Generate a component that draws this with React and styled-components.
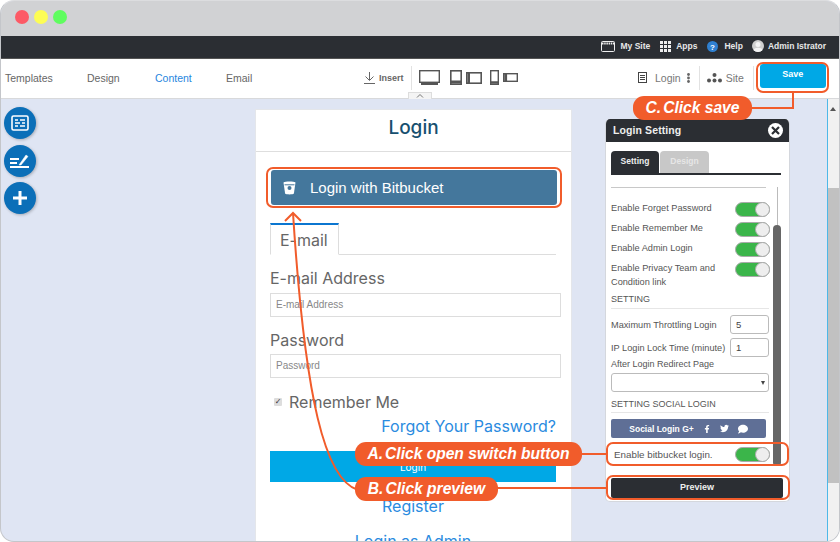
import React from 'react';
import styled, { createGlobalStyle } from 'styled-components';
import { FaFacebookF, FaTwitter, FaComment } from 'react-icons/fa';

const Global = createGlobalStyle`
  html, body { margin: 0; padding: 0; background: #fff; }
  * { box-sizing: border-box; }
`;
const Page = styled.div`
  position: relative; width: 840px; height: 542px; overflow: hidden;
`;
const Win = styled.div`
  width: 840px; height: 542px; overflow: hidden; display: flex; flex-direction: column;
  border-radius: 14px; border: 1px solid #c4c6ca; border-top-color: #dcdddf;
  font-family: "Liberation Sans", Arial, sans-serif; background: #dfe5f3;
`;
const TitleBar = styled.div`
  height: 35px; flex: none; background: #d1d2d4; display: flex; align-items: center; gap: 5px; padding: 0 0 3px 14px;
`;
const Dot = styled.span`
  width: 14px; height: 14px; border-radius: 50%; background: ${p => p.$c};
`;
const DarkBar = styled.div`
  height: 23px; flex: none; background: #2b2e33; display: flex; align-items: center; justify-content: flex-end;
  padding: 0 13px 2px 0; border-bottom: 1px solid #555;
`;
const TopItem = styled.span`
  display: flex; align-items: center; gap: ${p => p.$g || 5}px; margin-left: ${p => p.$ml || 10}px;
  color: #e8e8e8; font-size: 8.5px; font-weight: bold; white-space: nowrap;
`;
const Toolbar = styled.div`
  height: 40px; flex: none; background: #fff; border-bottom: 1px solid #d8d9db; display: flex; align-items: center;
  position: relative; padding: 0 0 2px 4px;
`;
const Nav = styled.span`
  font-size: 10.5px; color: ${p => p.$active ? '#1f86de' : '#666'}; width: ${p => p.$w}px; flex: none;
`;
const Insert = styled.span`
  display: flex; align-items: center; gap: 4px; font-size: 9px; font-weight: bold; color: #666; margin-left: 112px; width: 47px; flex: none;
`;
const VSep = styled.span`
  width: 1px; height: 24px; background: #e2e2e2; flex: none; margin-left: ${p => p.$ml || 0}px;
`;
const Devices = styled.span`
  display: flex; align-items: center; flex: none; margin-left: 7px; width: 219px;
`;
const ToolText = styled.span`
  font-size: 10.5px; color: #777; flex: none; margin-left: ${p => p.$ml || 0}px;
`;
const SaveBtn = styled.button`
  width: 66px; height: 24px; background: #00a8e6; border: 0; border-radius: 3px; color: #fff; font: bold 9px "Liberation Sans", Arial, sans-serif;
  margin: -4px 0 0 6px; padding: 0 0 3px; flex: none;
`;
const Collapse = styled.span`
  position: absolute; left: 407px; bottom: -1px; width: 24px; height: 7px; background: #f4f4f4; border: 1px solid #ddd; border-bottom: 0;
  display: flex; align-items: center; justify-content: center;
`;
const Body = styled.div`
  flex: 1; min-height: 0; display: flex; position: relative;
`;
const Rail = styled.div`
  width: 254px; flex: none; display: flex; flex-direction: column; gap: 5.5px; padding: 8px 0 0 3px;
`;
const RailBtn = styled.span`
  width: 32px; height: 32px; border-radius: 50%; background: #0b6fb8; display: flex; align-items: center; justify-content: center;
  box-shadow: 1px 1px 3px rgba(0,0,0,.25);
`;
const Card = styled.div`
  width: 317px; flex: none; margin-top: 10px; height: 480px; background: #fff; border: 1px solid #e4e6ea; font-family: "Inter", sans-serif;
`;
const CardHead = styled.div`
  height: 42px; border-bottom: 1px solid #dedede; text-align: center; line-height: 36px; font-size: 19px; font-weight: 500; color: #17506f;
`;
const CardBody = styled.div`
  padding: 18px 14px 0 14px; display: flex; flex-direction: column; align-items: stretch;
`;
const BitBtn = styled.div`
  height: 35px; width: 286px; margin-left: 1px; background: #44779c; border-radius: 3px; display: flex; align-items: center; padding-left: 12px; gap: 14px;
  color: #fff; font: 15px "Liberation Sans", Arial, sans-serif;
`;
const TabRow = styled.div`
  margin-top: 18px; width: 286px; height: 32px; border-bottom: 1px solid #ddd; display: flex;
`;
const EmailTab = styled.span`
  width: 69px; height: 32px; border: 1px solid #ddd; border-top: 2px solid #0b76d0; border-bottom: 1px solid #fff; font-size: 16px; color: #666;
  padding: 5px 0 0 9px;
`;
const FieldLabel = styled.div`
  font-size: 16px; color: #666; margin-top: ${p => p.$mt}px; line-height: 18px;
`;
const FieldBox = styled.div`
  width: 291px; height: 24px; border: 1px solid #ddd; margin-top: ${p => p.$mt}px; font: 10px/22px "Liberation Sans", Arial, sans-serif; color: #888; padding-left: 5px;
`;
const Remember = styled.div`
  margin-top: 15px; display: flex; align-items: center; gap: 7px; padding-left: 4px; font-size: 16px; color: #666; height: 18px;
`;
const Check = styled.span`
  width: 8px; height: 8px; background: #ddd; border-radius: 1px; color: #333; font: bold 8px/8px "DejaVu Sans", sans-serif; text-align: center;
`;
const LinkRow = styled.div`
  color: #2a8be0; font-size: 16px; text-align: ${p => p.$a || 'right'}; width: 286px; margin-top: ${p => p.$mt}px; line-height: 20px; white-space: nowrap;
`;
const LoginBtn = styled.div`
  width: 286px; height: 31px; background: #00a8e6; margin-top: 15px; color: #fff; text-align: center; font-size: 10px; line-height: 32px;
`;
const Scrollbar = styled.div`
  margin-left: auto; width: 12px; flex: none; background: #f1f1f1; border-left: 1px solid #4db8e8; position: relative; display: flex; flex-direction: column; align-items: center;
`;
const Thumb = styled.div`
  width: 100%; height: 295px; background: #c1c1c1; margin-top: 89px;
`;
const ScrollArrow = styled.div`
  position: absolute; top: 8px; left: 2px; width: 0; height: 0; border-left: 3.5px solid transparent; border-right: 3.5px solid transparent; border-bottom: 4px solid #555;
`;
const Panel = styled.div`
  position: absolute; left: 604px; top: 20px; width: 185px; height: 383px; background: #fff; border: 1px solid #d4d7dd; border-top: 0; border-radius: 5px;
  overflow: hidden; color: #555; font-size: 9.2px; display: flex; flex-direction: column;
`;
const PanelHead = styled.div`
  height: 23px; background: #2b2e33; color: #eee; font-size: 10.5px; font-weight: bold; letter-spacing: .1px; display: flex; align-items: center; justify-content: space-between;
  padding: 0 6px 1px 7px; flex: none;
`;
const Close = styled.span`
  width: 15px; height: 15px; border-radius: 50%; background: #fff; display: flex; align-items: center; justify-content: center;
`;
const PanelTabs = styled.div`
  margin: 9px 8px 0 5px; height: 24px; border-bottom: 2px solid #2b2e33; display: flex; gap: 1px; flex: none;
`;
const PTab = styled.span`
  width: ${p => p.$w}px; height: 22px; border-radius: 4px 4px 0 0; background: ${p => p.$on ? '#2b2e33' : '#c8c8c8'}; color: ${p => p.$on ? '#eee' : '#e6e6e6'};
  font-size: 8.5px; font-weight: bold; text-align: center; line-height: 21px;
`;
const Rule = styled.div`
  height: 1px; width: ${p => p.$w || 158}px; background: ${p => p.$c || '#e6e6e6'}; margin: ${p => p.$t || 0}px 0 ${p => p.$b || 0}px 5px; flex: none;
`;
const Row = styled.div`
  display: flex; justify-content: space-between; align-items: flex-start; padding: 0 19px 0 5px; height: ${p => p.$h || 20}px; flex: none; margin-top: ${p => p.$mt || 0}px;
`;
const RowText = styled.span`
  line-height: 13.5px; width: 118px;
`;
const BitText = styled.span`
  line-height: 16px; padding-left: 3px; font-size: 9.8px; white-space: nowrap;
`;
const Toggle = styled.span`
  width: 35px; height: 15px; border-radius: 8px; background: #3bb54a; border: 1px solid #aaa; position: relative; flex: none;
`;
const Knob = styled.span`
  position: absolute; right: -1px; top: -1px; width: 15px; height: 15px; border-radius: 50%; background: #eee; border: 1px solid #aaa;
`;
const Section = styled.div`
  padding-left: 5px; margin-top: ${p => p.$mt || 0}px; flex: none; line-height: 12px; font-size: 9px;
`;
const NumRow = styled.div`
  display: flex; justify-content: space-between; align-items: center; padding: 0 20px 0 5px; height: 19px; margin-top: ${p => p.$mt || 0}px; flex: none; white-space: nowrap;
`;
const NumBox = styled.span`
  width: 39px; height: 19px; border: 1px solid #bbb; border-radius: 3px; padding-left: 5px; line-height: 17px; font-size: 9.5px; color: #444; background: #fff; flex: none;
`;
const SelectBox = styled.div`
  width: 158px; height: 19px; margin: 3px 0 0 5px; border: 1px solid #bbb; border-radius: 3px; flex: none; position: relative;
  &::after { content: ""; position: absolute; right: 3px; top: 7px; border-left: 2.5px solid transparent; border-right: 2.5px solid transparent; border-top: 4px solid #444; }
`;
const SocialBar = styled.div`
  width: 155px; height: 19px; margin: 6px 0 0 5px; background: #5f6f96; border-radius: 2px; color: #fff; font-size: 8.5px; font-weight: bold; display: flex; align-items: center; justify-content: center; gap: 9px; flex: none;
`;
const PreviewBtn = styled.div`
  width: 172px; height: 20px; margin: 14px 0 0 5px; background: #2b2e33; border-radius: 2px; color: #eee; font-size: 9px; font-weight: bold; text-align: center; line-height: 19px; flex: none;
`;
const Scroll = styled.div`
  position: absolute; right: 8px; top: 68px; width: 8px; height: 278px; display: flex; justify-content: center;
  &::before { content: ""; width: 1px; height: 40px; background: #bbb; }
  &::after { content: ""; position: absolute; left: 0; top: 38px; width: 8px; height: 240px; background: #666; border-radius: 4px 4px 2px 2px; }
`;
const Outline = styled.div`
  position: absolute; left: ${p => p.$x}px; top: ${p => p.$y}px; width: ${p => p.$w}px; height: ${p => p.$h}px; border: 2px solid #f15c2b; border-radius: 7px; pointer-events: none;
`;
const Bubble = styled.div`
  position: absolute; left: ${p => p.$x}px; top: ${p => p.$y}px; width: ${p => p.$w}px; height: 24px; background: #f15c2b; border-radius: 11px; color: #fff;
  font: italic bold 15.6px/24px "Liberation Sans", Arial, sans-serif; text-align: center; white-space: nowrap;
`;
const Mark = styled.span`
  margin-right: 2px;
`;
const Wires = styled.svg`
  position: absolute; left: 0; top: 0; pointer-events: none;
`;
const Ico = styled.svg`
  display: block; flex: none; margin-left: ${p => p.$ml || 0}px;
`;

const Sw = () => <Toggle><Knob /></Toggle>;

export default function App() {
  return (
    <Page>
      <Global />
      <Win>
        <TitleBar>
          <Dot $c="#fd5a66" /><Dot $c="#fdfd54" /><Dot $c="#5ffd5f" />
        </TitleBar>
        <DarkBar>
          <TopItem>
            <Ico width="14" height="11" viewBox="0 0 14 11" fill="none"><rect x=".5" y=".5" width="13" height="10" rx="1" stroke="#eee" /><path d="M1 2.5h12" stroke="#eee" strokeWidth="2" strokeDasharray="1.5 .7" /></Ico>
            My Site
          </TopItem>
          <TopItem>
            <Ico width="11" height="11" viewBox="0 0 11 11" fill="#eee"><path d="M0 0h3v3H0zM4 0h3v3H4zM8 0h3v3H8zM0 4h3v3H0zM4 4h3v3H4zM8 4h3v3H8zM0 8h3v3H0zM4 8h3v3H4zM8 8h3v3H8z" /></Ico>
            Apps
          </TopItem>
          <TopItem $ml="10" $g="6">
            <Ico width="11" height="11" viewBox="0 0 11 11"><circle cx="5.5" cy="5.5" r="5.5" fill="#2f80d0" /><text x="5.5" y="8.5" fontSize="8" fontWeight="bold" textAnchor="middle" fill="#fff" fontFamily="Liberation Sans">?</text></Ico>
            Help
          </TopItem>
          <TopItem $ml="9" $g="4">
            <Ico width="12" height="12" viewBox="0 0 12 12"><circle cx="6" cy="6" r="6" fill="#cfcfcf" /><circle cx="6" cy="4.5" r="2.5" fill="#f4f4f4" /><path d="M1.5 10c1-3 8-3 9 0-2 2.6-7 2.6-9 0z" fill="#f4f4f4" /></Ico>
            Admin Istrator
          </TopItem>
        </DarkBar>
        <Toolbar>
          <Nav $w={82}>Templates</Nav>
          <Nav $w={68}>Design</Nav>
          <Nav $w={71} $active>Content</Nav>
          <Nav $w={26}>Email</Nav>
          <Insert>
            <Ico width="11" height="12" viewBox="0 0 11 12" fill="none" stroke="#666"><path d="M5.5 0v8M1.5 4.5l4 4 4-4M0 11.5h11" /></Ico>
            Insert
          </Insert>
          <VSep />
          <Devices>
            <Ico width="21" height="15" viewBox="0 0 21 15" fill="none" stroke="#555"><rect x=".7" y=".7" width="19.6" height="11.6" strokeWidth="1.4" /><path d="M2 13.8h17" strokeWidth="2.4" /></Ico>
            <Ico $ml={10} width="12" height="15" viewBox="0 0 12 15" fill="none" stroke="#555"><rect x=".8" y=".8" width="10.4" height="13.4" strokeWidth="1.6" /><path d="M1 12h10" strokeWidth="2.8" /></Ico>
            <Ico $ml={4} width="16" height="12" viewBox="0 0 16 12" fill="none" stroke="#555"><rect x=".8" y=".8" width="14.4" height="10.4" strokeWidth="1.6" /><path d="M2.8 1v10" strokeWidth="2.4" /></Ico>
            <Ico $ml={8} width="9" height="15" viewBox="0 0 9 15" fill="none" stroke="#555"><rect x=".7" y=".7" width="7.6" height="13.6" strokeWidth="1.4" /><path d="M1 12.5h7" strokeWidth="2.6" /></Ico>
            <Ico $ml={4} width="15" height="9" viewBox="0 0 15 9" fill="none" stroke="#555"><rect x=".7" y=".7" width="13.6" height="7.6" strokeWidth="1.4" /><path d="M2.7 1v7" strokeWidth="2.8" /></Ico>
          </Devices>
          <Ico width="9" height="11" viewBox="0 0 9 11" fill="none" stroke="#444"><rect x=".5" y=".5" width="8" height="10" /><path d="M2 3.5h5M2 5.5h5M2 7.5h5" /></Ico>
          <ToolText $ml={8}>Login</ToolText>
          <Ico $ml={6} width="3" height="10" viewBox="0 0 3 10" fill="#666"><circle cx="1.5" cy="1.5" r="1.4" /><circle cx="1.5" cy="5" r="1.4" /><circle cx="1.5" cy="8.5" r="1.4" /></Ico>
          <VSep $ml={9} />
          <Ico $ml={7} width="15" height="10" viewBox="0 0 15 10" fill="#555"><circle cx="7.5" cy="2" r="2" /><circle cx="2" cy="7.5" r="2" /><circle cx="7.5" cy="7.5" r="2" /><circle cx="13" cy="7.5" r="2" /></Ico>
          <ToolText $ml={4}>Site</ToolText>
          <VSep $ml={9} />
          <SaveBtn>Save</SaveBtn>
          <Collapse>
            <Ico width="8" height="4" viewBox="0 0 8 4" fill="none" stroke="#777"><path d="M1 3.5l3-3 3 3" /></Ico>
          </Collapse>
        </Toolbar>
        <Body>
          <Rail>
            <RailBtn>
              <Ico width="18" height="16" viewBox="0 0 18 16" fill="none" stroke="#fff"><rect x="1" y="1" width="16" height="14" rx="1.5" strokeWidth="1.6" /><path d="M4 5h3M9 5h5M4 8h5M11 8h3M4 11h3M9 11h5" strokeWidth="1.6" /></Ico>
            </RailBtn>
            <RailBtn>
              <Ico width="20" height="14" viewBox="0 0 20 14" fill="none" stroke="#fff"><path d="M0 5h9M0 9h7M0 13h19" strokeWidth="1.8" /><path d="M9 11l7-10 2 1.5-7 8.5z" fill="#fff" strokeWidth=".5" /></Ico>
            </RailBtn>
            <RailBtn>
              <Ico width="14" height="14" viewBox="0 0 14 14" fill="none" stroke="#fff"><path d="M7 0v14M0 7h14" strokeWidth="3" /></Ico>
            </RailBtn>
          </Rail>
          <Card>
            <CardHead>Login</CardHead>
            <CardBody>
              <BitBtn>
                <Ico width="13" height="14" viewBox="0 0 13 14"><path d="M.5 1.5C2 .3 11 .3 12.5 1.5l-1.6 11c-1 1.2-7.8 1.2-8.8 0z" fill="#fff" /><circle cx="6.5" cy="7" r="2" fill="#44779c" /><path d="M1.5 3.8h10" stroke="#44779c" /></Ico>
                Login with Bitbucket
              </BitBtn>
              <TabRow><EmailTab>E-mail</EmailTab></TabRow>
              <FieldLabel $mt={14}>E-mail Address</FieldLabel>
              <FieldBox $mt={6}>E-mail Address</FieldBox>
              <FieldLabel $mt={14}>Password</FieldLabel>
              <FieldBox $mt={5}>Password</FieldBox>
              <Remember><Check>✓</Check>Remember Me</Remember>
              <LinkRow $mt={5}>Forgot Your Password?</LinkRow>
              <LoginBtn>Login</LoginBtn>
              <LinkRow $mt={14} $a="center">Register</LinkRow>
              <LinkRow $mt={15} $a="center">Login as Admin</LinkRow>
            </CardBody>
          </Card>
          <Scrollbar><ScrollArrow /><Thumb /></Scrollbar>
          <Panel>
            <PanelHead>
              Login Setting
              <Close><Ico width="9" height="9" viewBox="0 0 9 9" stroke="#2b2e33" strokeWidth="2.2"><path d="M1 1l7 7M8 1l-7 7" /></Ico></Close>
            </PanelHead>
            <PanelTabs>
              <PTab $on $w={48}>Setting</PTab>
              <PTab $w={49}>Design</PTab>
            </PanelTabs>
            <Rule $c="#c8c8c8" $w={155} $t={12} $b={14} />
            <Row><RowText>Enable Forget Password</RowText><Sw /></Row>
            <Row><RowText>Enable Remember Me</RowText><Sw /></Row>
            <Row><RowText>Enable Admin Login</RowText><Sw /></Row>
            <Row $h={33}><RowText>Enable Privacy Team and Condition link</RowText><Sw /></Row>
            <Section $mt={-2}>SETTING</Section>
            <Rule $t={3} />
            <NumRow $mt={6}><span>Maximum Throttling Login</span><NumBox>5</NumBox></NumRow>
            <NumRow $mt={4}><span>IP Login Lock Time (minute)</span><NumBox>1</NumBox></NumRow>
            <Section $mt={1}>After Login Redirect Page</Section>
            <SelectBox />
            <Section $mt={6}>SETTING SOCIAL LOGIN</Section>
            <Rule $t={2} />
            <SocialBar>
              Social Login G+
              <FaFacebookF size={8} />
              <FaTwitter size={9} />
              <FaComment size={10} />
            </SocialBar>
            <Row $mt={9} $h={17}><BitText>Enable bitbucket login.</BitText><Sw /></Row>
            <PreviewBtn>Preview</PreviewBtn>
            <Scroll />
          </Panel>
        </Body>
      </Win>
      <Wires width="840" height="542" viewBox="0 0 840 542" fill="none" stroke="#f15c2b" strokeWidth="2">
        <path d="M750 108H793V92" />
        <path d="M580 454H606" />
        <path d="M496 488H606" />
        <path d="M358 490C325 480 305 400 293 213" />
        <path d="M285 221l8-8 8 8" />
      </Wires>
      <Outline $x={756} $y={62} $w={73} $h={31} />
      <Outline $x={266} $y={167} $w={296} $h={41} />
      <Outline $x={606} $y={442} $w={183} $h={24} />
      <Outline $x={606} $y={475} $w={184} $h={25} />
      <Bubble $x={633} $y={96} $w={119}><Mark>C.</Mark>Click save</Bubble>
      <Bubble $x={355} $y={442} $w={227}><Mark>A.</Mark>Click open switch button</Bubble>
      <Bubble $x={355} $y={477} $w={143}><Mark>B.</Mark>Click preview</Bubble>
    </Page>
  );
}
